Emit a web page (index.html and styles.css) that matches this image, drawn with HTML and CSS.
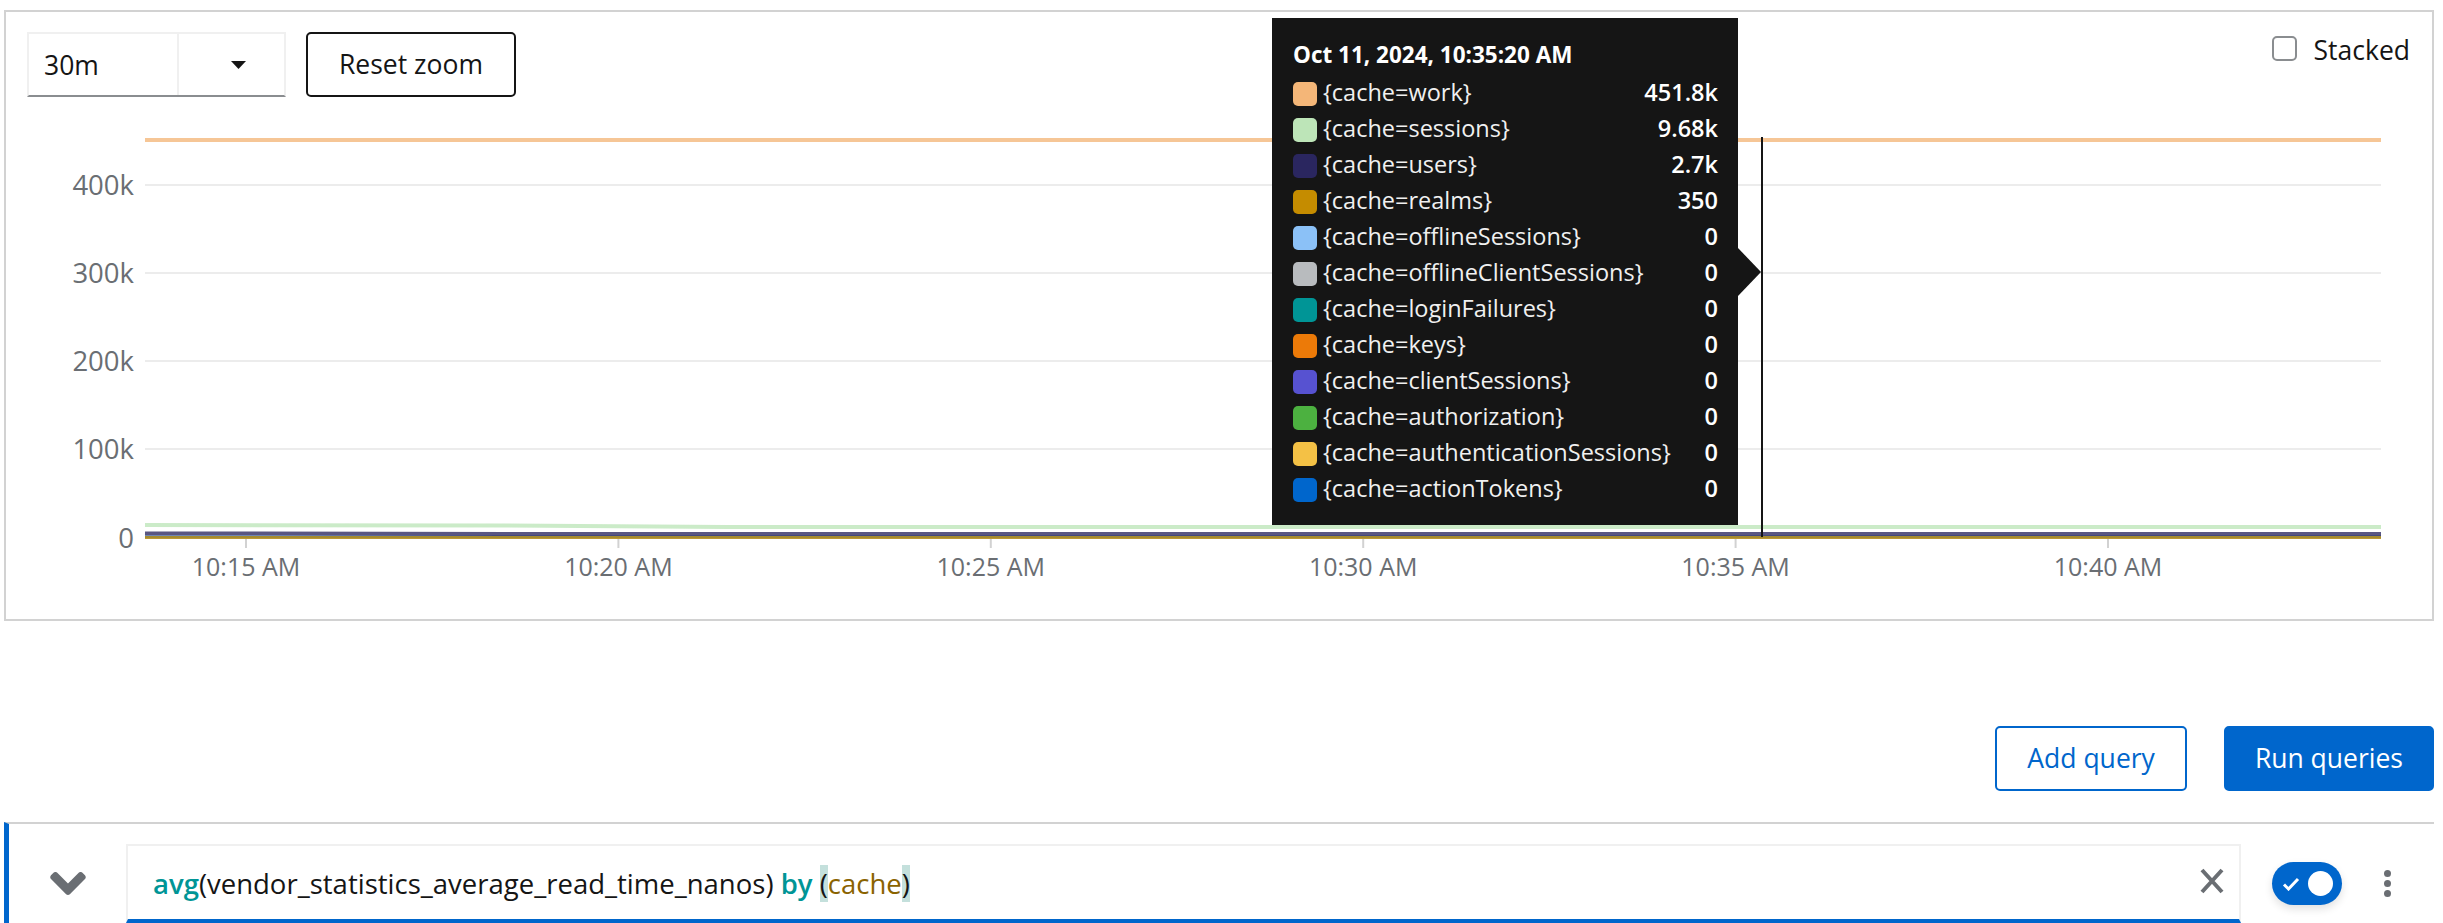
FILE: index.html
```html
<!DOCTYPE html>
<html lang="en">
<head>
<meta charset="utf-8">
<title>Query chart</title>
<link rel="stylesheet" href="styles.css">
</head>
<body>
<div class="page">
  <section class="panel">
    <div class="toolbar">
      <div class="controls">
        <div class="select">
          <span class="select-value">30m</span>
          <span class="select-toggle"><svg class="caret" width="15" height="8" viewBox="0 0 15 8"><polygon points="0,0 15,0 7.5,8"/></svg></span>
        </div>
        <button class="btn btn-plain">Reset zoom</button>
      </div>
      <label class="stacked"><span class="checkbox"></span><span class="stacked-text">Stacked</span></label>
    </div>
    <svg class="chart" width="2426" height="522" viewBox="0 0 2426 522">
      <g class="grid">
        <line x1="139" y1="88" x2="2375" y2="88"/>
        <line x1="139" y1="176" x2="2375" y2="176"/>
        <line x1="139" y1="264" x2="2375" y2="264"/>
        <line x1="139" y1="352" x2="2375" y2="352"/>
      </g>
      <g class="ticks">
        <line x1="240" y1="442" x2="240" y2="451"/>
        <line x1="612.4" y1="442" x2="612.4" y2="451"/>
        <line x1="984.8" y1="442" x2="984.8" y2="451"/>
        <line x1="1357.2" y1="442" x2="1357.2" y2="451"/>
        <line x1="1729.6" y1="442" x2="1729.6" y2="451"/>
        <line x1="2102" y1="442" x2="2102" y2="451"/>
      </g>
      <g class="ylabels">
        <text x="128" y="98">400k</text>
        <text x="128" y="186">300k</text>
        <text x="128" y="274">200k</text>
        <text x="128" y="362">100k</text>
        <text x="128" y="451">0</text>
      </g>
      <g class="xlabels">
        <text x="240" y="479">10:15 AM</text>
        <text x="612.4" y="479">10:20 AM</text>
        <text x="984.8" y="479">10:25 AM</text>
        <text x="1357.2" y="479">10:30 AM</text>
        <text x="1729.6" y="479">10:35 AM</text>
        <text x="2102" y="479">10:40 AM</text>
      </g>
      <g class="series">
        <polyline class="s-zero" points="139,440 2375,440"/>
        <polyline class="s-realms" points="139,440.5 2375,440.5"/>
        <polyline class="s-users" points="139,436.5 600,437 2375,437"/>
        <polyline class="s-sessions" points="139,428 500,428.5 720,430 2375,430"/>
        <polyline class="s-work" points="139,43 2375,43"/>
      </g>
      <line class="cursor" x1="1756" y1="40" x2="1756" y2="440"/>
    </svg>
    <div class="tooltip">
      <div class="tt-title">Oct 11, 2024, 10:35:20 AM</div>
      <div class="tt-row"><span class="swatch" style="--c:#f4b678"></span><span class="tt-name">{cache=work}</span><span class="tt-value">451.8k</span></div>
      <div class="tt-row"><span class="swatch" style="--c:#bde5b8"></span><span class="tt-name">{cache=sessions}</span><span class="tt-value">9.68k</span></div>
      <div class="tt-row"><span class="swatch" style="--c:#2a265f"></span><span class="tt-name">{cache=users}</span><span class="tt-value">2.7k</span></div>
      <div class="tt-row"><span class="swatch" style="--c:#c58c00"></span><span class="tt-name">{cache=realms}</span><span class="tt-value">350</span></div>
      <div class="tt-row"><span class="swatch" style="--c:#8bc1f7"></span><span class="tt-name">{cache=offlineSessions}</span><span class="tt-value">0</span></div>
      <div class="tt-row"><span class="swatch" style="--c:#b8bbbe"></span><span class="tt-name">{cache=offlineClientSessions}</span><span class="tt-value">0</span></div>
      <div class="tt-row"><span class="swatch" style="--c:#009596"></span><span class="tt-name">{cache=loginFailures}</span><span class="tt-value">0</span></div>
      <div class="tt-row"><span class="swatch" style="--c:#ec7a08"></span><span class="tt-name">{cache=keys}</span><span class="tt-value">0</span></div>
      <div class="tt-row"><span class="swatch" style="--c:#5752d1"></span><span class="tt-name">{cache=clientSessions}</span><span class="tt-value">0</span></div>
      <div class="tt-row"><span class="swatch" style="--c:#4cb140"></span><span class="tt-name">{cache=authorization}</span><span class="tt-value">0</span></div>
      <div class="tt-row"><span class="swatch" style="--c:#f4c145"></span><span class="tt-name">{cache=authenticationSessions}</span><span class="tt-value">0</span></div>
      <div class="tt-row"><span class="swatch" style="--c:#0066cc"></span><span class="tt-name">{cache=actionTokens}</span><span class="tt-value">0</span></div>
    </div>
  </section>

  <div class="actions">
    <button class="btn btn-secondary">Add query</button>
    <button class="btn btn-primary">Run queries</button>
  </div>

  <div class="query-row">
    <svg class="chevron" width="36" height="23" viewBox="0 153 320 207"><path d="M143 352.3L7 216.3c-9.4-9.4-9.4-24.6 0-33.9l22.6-22.6c9.4-9.4 24.6-9.4 33.9 0l96.4 96.4 96.4-96.4c9.4-9.4 24.6-9.4 33.9 0l22.6 22.6c9.4 9.4 9.4 24.6 0 33.9l-136 136c-9.2 9.4-24.4 9.4-33.8 0z"/></svg>
    <div class="query-input">
      <span class="query-text"><span class="kw">avg</span>(vendor_statistics_average_read_time_nanos) <span class="kw">by</span> <span class="match">(</span><span class="lbl">cache</span><span class="match">)</span></span>
      <svg class="clear" width="26" height="26" viewBox="0 0 26 26"><path d="M3 2 L23 24 M23 2 L3 24"/></svg>
    </div>
    <span class="toggle">
      <svg class="check" width="18" height="14" viewBox="0 0 18 14"><path d="M2 7.5 L6.5 12 L16 2"/></svg>
      <span class="knob"></span>
    </span>
    <span class="kebab"><span class="dot"></span><span class="dot"></span><span class="dot"></span></span>
  </div>
</div>
</body>
</html>
```

FILE: styles.css
```css
* {
  box-sizing: border-box;
}

html,
body {
  margin: 0;
  padding: 0;
}

body {
  overflow: hidden;
  background: #ffffff;
  color: #151515;
  font-family: "Open Sans", "Noto Sans", sans-serif;
}

.page {
  padding: 10px 9px 0 4px;
}

/* ---------- chart panel ---------- */
.panel {
  position: relative;
  height: 611px;
  border: 2px solid #d2d2d2;
}

.toolbar {
  display: flex;
  justify-content: space-between;
  align-items: flex-start;
  height: 85px;
  padding: 20px 22px 0 21px;
}

.controls {
  display: flex;
  gap: 20px;
}

.select {
  display: flex;
  width: 259px;
  height: 65px;
  border: 2px solid #f0f0f0;
  border-bottom-color: #8a8d90;
}

.select-value {
  display: flex;
  align-items: center;
  width: 150px;
  padding-left: 15px;
  border-right: 2px solid #f0f0f0;
  font-size: 26.5px;
}

.select-toggle {
  display: flex;
  flex: 1;
  align-items: center;
  padding-left: 52px;
}

.caret {
  fill: #151515;
}

.btn {
  height: 65px;
  border-radius: 5px;
  font-family: "Open Sans", "Noto Sans", sans-serif;
  font-size: 26.5px;
  line-height: 1;
  cursor: pointer;
}

.btn-plain {
  padding: 0 31px;
  border: 2px solid #151515;
  background: #ffffff;
  color: #151515;
}

.stacked {
  display: flex;
  align-items: center;
  gap: 17px;
  height: 25px;
  margin-top: 4px;
  font-size: 26.5px;
}

.stacked-text {
  margin-top: 3px;
}

.checkbox {
  width: 25px;
  height: 25px;
  border: 2px solid #8a8d90;
  border-radius: 5px;
}

.chart {
  display: block;
}

.grid line {
  stroke: #ececec;
  stroke-width: 2;
}

.ticks line {
  stroke: #d2d2d2;
  stroke-width: 2;
}

.ylabels text,
.xlabels text {
  font-family: "Open Sans", "Noto Sans", sans-serif;
  fill: #6a6e73;
}

.ylabels text {
  font-size: 27.5px;
  text-anchor: end;
}

.xlabels text {
  font-size: 25px;
  text-anchor: middle;
}

.series polyline {
  fill: none;
  stroke-opacity: 0.78;
}

.s-zero {
  stroke: #0066cc;
  stroke-width: 3;
}

.s-realms {
  stroke: #c58c00;
  stroke-width: 3;
}

.s-users {
  stroke: #2a265f;
  stroke-width: 4;
}

.s-sessions {
  stroke: #bde5b8;
  stroke-width: 4;
}

.s-work {
  stroke: #f4b678;
  stroke-width: 4;
}

.cursor {
  stroke: #151515;
  stroke-width: 2;
}

/* ---------- tooltip ---------- */
.tooltip {
  position: absolute;
  left: 1266px;
  top: 6px;
  width: 466px;
  height: 507px;
  padding: 19px 20px 0 21px;
  background: #151515;
  color: #ffffff;
}

.tooltip::after {
  content: "";
  position: absolute;
  left: 100%;
  top: 230px;
  border-left: 23px solid #151515;
  border-top: 24px solid transparent;
  border-bottom: 24px solid transparent;
}

.tt-title {
  margin-bottom: 3px;
  font-size: 22.5px;
  font-weight: 700;
  line-height: 36px;
}

.tt-row {
  display: flex;
  align-items: center;
  height: 36px;
  font-size: 23.5px;
  line-height: 30px;
}

.swatch {
  flex: none;
  width: 24px;
  height: 24px;
  margin-right: 6px;
  border-radius: 5px;
  background: var(--c);
}

.tt-name {
  margin-top: -4px;
  color: #f0f0f0;
}

.tt-value {
  margin-left: auto;
  margin-top: -4px;
  font-weight: 600;
}

/* ---------- actions ---------- */
.actions {
  display: flex;
  justify-content: flex-end;
  gap: 37px;
  margin-top: 105px;
}

.btn-secondary {
  padding: 0 30px;
  border: 2px solid #0066cc;
  background: #ffffff;
  color: #0066cc;
}

.btn-primary {
  padding: 0 29px;
  border: 2px solid #0066cc;
  background: #0066cc;
  color: #ffffff;
}

/* ---------- query row ---------- */
.query-row {
  display: flex;
  align-items: center;
  margin-top: 31px;
  padding: 20px 43px 0 41px;
  border-top: 2px solid #d2d2d2;
  border-left: 5px solid #0066cc;
}

.chevron {
  flex: none;
  margin-right: 40px;
  fill: #6a6e73;
}

.query-input {
  display: flex;
  flex: 1;
  align-items: center;
  height: 79px;
  padding: 2px 14px 0 25px;
  border: 2px solid #f0f0f0;
  border-bottom: 4px solid #0066cc;
  font-size: 27.5px;
}

.query-text {
  flex: 1;
  white-space: nowrap;
  color: #151515;
}

.kw {
  font-weight: 600;
  color: #009596;
}

.lbl {
  color: #8a6300;
}

.match {
  background: #c4e0dc;
}

.clear {
  flex: none;
  margin-top: -6px;
  fill: none;
  stroke: #6a6e73;
  stroke-width: 4;
}

.toggle {
  display: flex;
  flex: none;
  align-items: center;
  justify-content: space-between;
  width: 70px;
  height: 43px;
  margin-left: 31px;
  padding: 0 9px 0 10px;
  border-radius: 22px;
  background: #0066cc;
  box-shadow: 0 4px 8px rgba(0, 0, 0, 0.12);
}

.check {
  fill: none;
  stroke: #ffffff;
  stroke-width: 3;
}

.knob {
  width: 25px;
  height: 25px;
  border-radius: 50%;
  background: #ffffff;
}

.kebab {
  display: flex;
  flex: none;
  flex-direction: column;
  gap: 3px;
  margin-left: 42px;
}

.dot {
  width: 7px;
  height: 7px;
  border-radius: 50%;
  background: #6a6e73;
}
```
